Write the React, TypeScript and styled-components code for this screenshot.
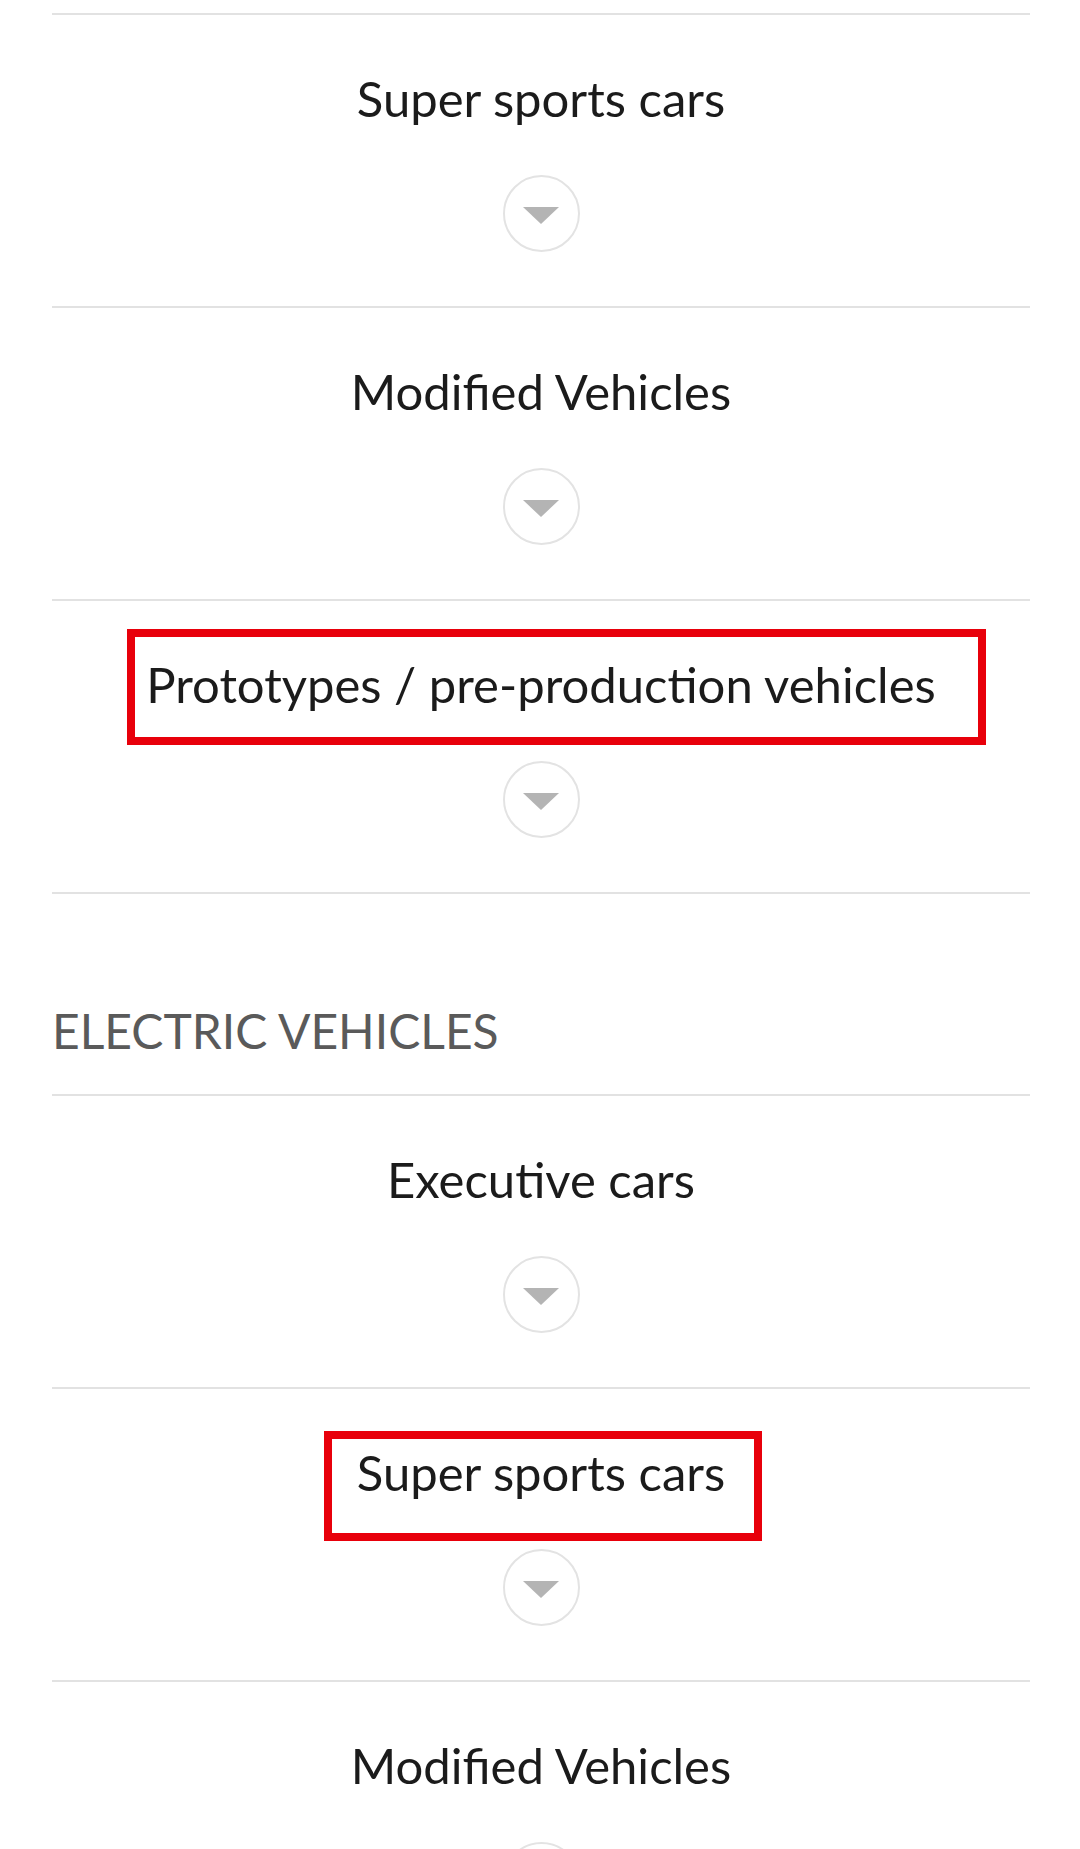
import React from "react";
import styled, { createGlobalStyle } from "styled-components";

const Global = createGlobalStyle`
  html, body { margin: 0; padding: 0; background: #ffffff; }
  body { font-family: Lato, "Open Sans", sans-serif; -webkit-font-smoothing: antialiased; }
`;

const Page = styled.div`
  width: 1080px;
  height: 1849px;
  overflow: hidden;
  box-sizing: border-box;
  padding: 13px 50px 0 52px;
  background: #fff;
`;

const Row = styled.div`
  position: relative;
  border-top: 2px solid #e2e2e2;
  padding: 54px 0 54px;
  display: flex;
  flex-direction: column;
  align-items: center;
`;

const Title = styled.div`
  font-size: 49px;
  line-height: 58px;
  color: #1b1b1b;
  font-weight: 400;
  text-align: center;
  white-space: nowrap;
`;

const Toggle = styled.button`
  margin-top: 48px;
  width: 77px;
  height: 77px;
  border-radius: 50%;
  border: 2px solid #e3e3e3;
  background: #fff;
  padding: 0;
  display: flex;
  align-items: center;
  justify-content: center;
  box-sizing: border-box;
  cursor: pointer;
`;

const Arrow = styled.span`
  width: 0;
  height: 0;
  margin-top: 3px;
  border-left: 18px solid transparent;
  border-right: 18px solid transparent;
  border-top: 17px solid #b4b4b4;
`;

const SectionHeader = styled.div`
  border-top: 2px solid #e2e2e2;
  padding: 108px 0 34px;
`;

const SectionTitle = styled.h2`
  margin: 0;
  font-size: 48px;
  line-height: 58px;
  font-weight: 400;
  color: #5a5a5a;
  text-transform: uppercase;
`;

const Highlight = styled.div<{ $top: number; $left: number; $w: number; $h: number }>`
  position: absolute;
  top: ${(p) => p.$top}px;
  left: ${(p) => p.$left}px;
  width: ${(p) => p.$w}px;
  height: ${(p) => p.$h}px;
  border: 8px solid #e8000b;
  box-sizing: border-box;
  pointer-events: none;
`;

type Box = { top: number; left: number; w: number; h: number };

const Item = ({ label, box }: { label: string; box?: Box }) => (
  <Row>
    <Title>{label}</Title>
    <Toggle aria-label={`Expand ${label}`}>
      <Arrow />
    </Toggle>
    {box && <Highlight $top={box.top} $left={box.left} $w={box.w} $h={box.h} />}
  </Row>
);

export default function App() {
  return (
    <>
      <Global />
      <Page>
        <Item label="Super sports cars" />
        <Item label="Modified Vehicles" />
        <Item
          label="Prototypes / pre-production vehicles"
          box={{ top: 28, left: 75, w: 859, h: 116 }}
        />
        <SectionHeader>
          <SectionTitle>Electric Vehicles</SectionTitle>
        </SectionHeader>
        <Item label="Executive cars" />
        <Item label="Super sports cars" box={{ top: 42, left: 272, w: 438, h: 110 }} />
        <Item label="Modified Vehicles" />
      </Page>
    </>
  );
}
